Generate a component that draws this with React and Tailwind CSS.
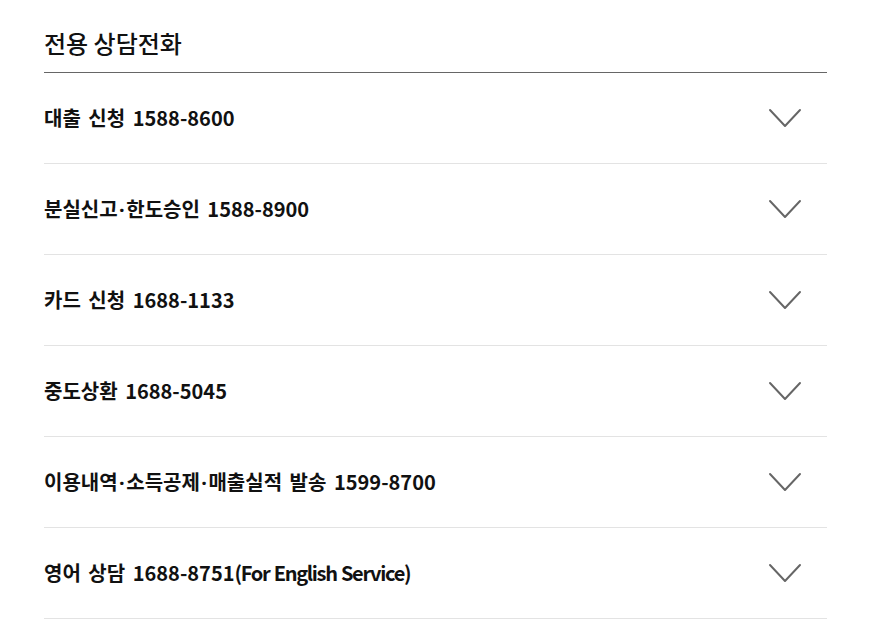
import React from 'react';

const lines = [
  { ko: '대출 신청 1588-8600' },
  { ko: '분실신고·한도승인 1588-8900' },
  { ko: '카드 신청 1688-1133' },
  { ko: '중도상환 1688-5045' },
  { ko: '이용내역·소득공제·매출실적 발송 1599-8700' },
  { ko: '영어 상담 1688-8751', en: '(For English Service)' },
];

const Chevron = () => (
  <svg width="34" height="21" viewBox="0 0 34 21" fill="none">
    <path d="M2 2 L17 18 L32 2" stroke="#666" strokeWidth="2" strokeLinecap="round" strokeLinejoin="round" />
  </svg>
);

// middle dots are narrow in the design, so render them in a latin font
const Label = ({ ko, en }) => {
  const parts = ko.split('·');
  return (
    <span className="text-[20px] leading-[30px] font-bold text-[#111] [word-spacing:3px]">
      {parts.map((p, i) => (
        <React.Fragment key={i}>
          {i > 0 && (
            <span className="px-[1.5px]" style={{ fontFamily: '"Noto Sans", sans-serif' }}>
              ·
            </span>
          )}
          {p}
        </React.Fragment>
      ))}
      {en && <span className="tracking-[-1.3px] [word-spacing:1px]">{en}</span>}
    </span>
  );
};

export default function App() {
  return (
    <div
      className="w-[870px] h-[620px] bg-white overflow-hidden"
      style={{ fontFamily: '"Noto Sans CJK KR", "Noto Sans", sans-serif' }}
    >
      <div className="ml-[44px] w-[783px]">
        {/* Header */}
        <div className="pt-[25px] pb-[11px] border-b border-[#666]">
          <h2 className="text-[24px] leading-[36px] text-[#111] font-medium">전용 상담전화</h2>
        </div>

        {/* Rows */}
        {lines.map((item) => (
          <div
            key={item.ko}
            className="h-[91px] flex items-center justify-between border-b border-[#e3e3e3]"
          >
            <Label ko={item.ko} en={item.en} />
            <span className="mr-[25px]">
              <Chevron />
            </span>
          </div>
        ))}
      </div>
    </div>
  );
}
